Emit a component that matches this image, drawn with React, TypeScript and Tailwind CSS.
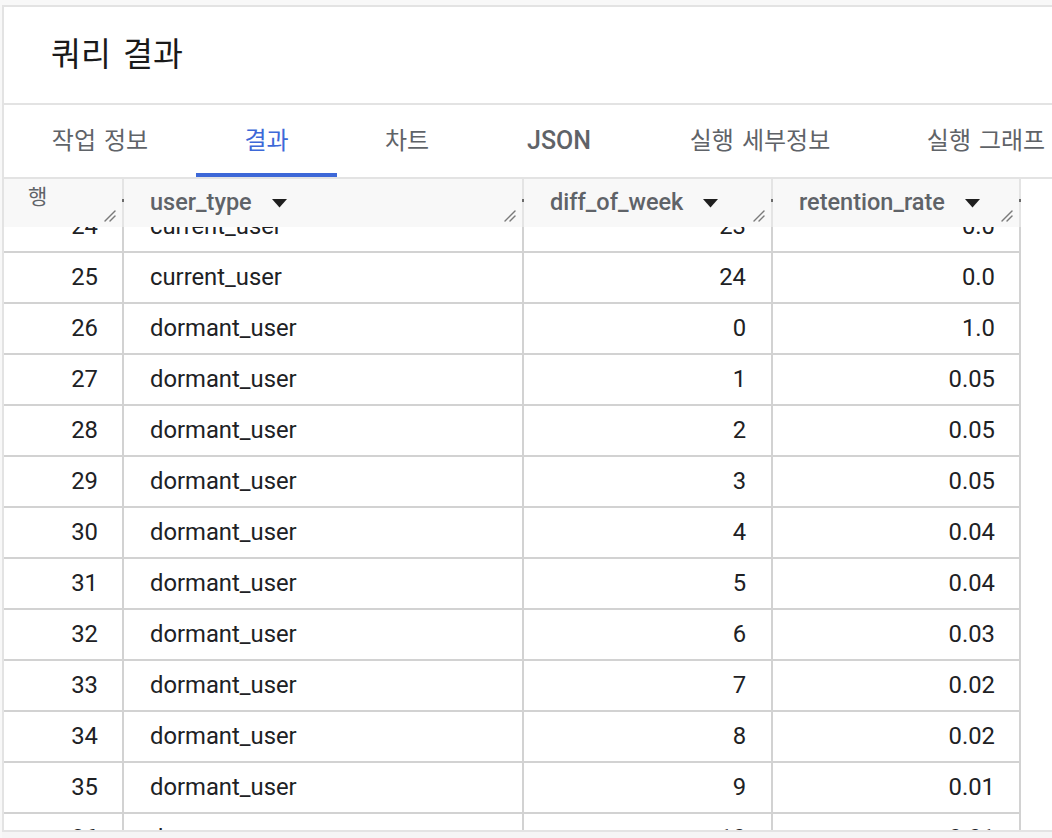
import React from "react";

const rows: [string, string, string, string][] = [
  ["24", "current_user", "23", "0.0"],
  ["25", "current_user", "24", "0.0"],
  ["26", "dormant_user", "0", "1.0"],
  ["27", "dormant_user", "1", "0.05"],
  ["28", "dormant_user", "2", "0.05"],
  ["29", "dormant_user", "3", "0.05"],
  ["30", "dormant_user", "4", "0.04"],
  ["31", "dormant_user", "5", "0.04"],
  ["32", "dormant_user", "6", "0.03"],
  ["33", "dormant_user", "7", "0.02"],
  ["34", "dormant_user", "8", "0.02"],
  ["35", "dormant_user", "9", "0.01"],
  ["36", "dormant_user", "10", "0.01"],
];

const tabs = [
  { label: "작업 정보", w: "w-[192px]" },
  { label: "결과", w: "w-[141px]", active: true },
  { label: "차트", w: "w-[140px]" },
  { label: "JSON", w: "w-[164px]", latin: true },
  { label: "실행 세부정보", w: "w-[238px]" },
  { label: "실행 그래프", w: "w-[214px]" },
];

function Grip() {
  return (
    <svg width="14" height="14" viewBox="0 0 14 14" className="absolute right-[5px] bottom-[5px]">
      <path d="M2 13 L12 3" stroke="#7a7a7a" strokeWidth="1.4" strokeLinecap="round" />
      <path d="M7 13 L12 8" stroke="#7a7a7a" strokeWidth="1.4" strokeLinecap="round" />
    </svg>
  );
}

function Caret() {
  return (
    <svg width="15" height="9" viewBox="0 0 15 9" className="ml-[20px] shrink-0">
      <path d="M0 0 H15 L7.5 8.5 Z" fill="#1f1f1f" />
    </svg>
  );
}

function Tick() {
  return <span className="absolute right-[-2px] top-[20px] w-[2px] h-[3px] bg-[#6b6b6b]" />;
}

function HeadCell({ label, w }: { label: string; w: string }) {
  return (
    <div className={`${w} relative h-full flex items-center pl-[26px] border-r-2 border-[#e4e4e4] bg-[#f8f8f8]`}>
      <span className="text-[23.5px] font-medium text-[#5f6368]">{label}</span>
      <Caret />
      <Tick />
      <Grip />
    </div>
  );
}

export default function App() {
  return (
    <div className="w-[1052px] h-[838px] overflow-hidden bg-[#f8f8f8] pt-[5px] pl-[2px] flex flex-col font-['Roboto','Noto_Sans_CJK_KR',sans-serif]">
      <div className="flex-1 min-h-0 flex flex-col bg-white border-l-2 border-t-2 border-[#e3e3e3]">
        <div className="h-[96px] shrink-0 flex items-center pl-[47px] pb-[6px] text-[32.5px] text-[#1a1a1a] font-['Noto_Sans_CJK_KR',sans-serif] [word-spacing:5px]">
          쿼리 결과
        </div>
        <div className="h-[76px] shrink-0 flex border-t-2 border-b-2 border-[#e3e3e3] overflow-hidden">
          {tabs.map((t) => (
            <div
              key={t.label}
              className={`${t.w} shrink-0 h-full flex items-center justify-center ${
                t.active
                  ? "text-[#3d68d8] shadow-[inset_0_-4px_0_#3d68d8]"
                  : "text-[#5f6368]"
              } ${t.latin ? "text-[25px] font-medium" : "text-[24px] [word-spacing:2px]"}`}
            >
              {t.label}
            </div>
          ))}
        </div>
        <div className="flex-1 min-h-0 relative overflow-hidden">
          <div className="pt-[23px]">
            {rows.map((r) => (
              <div key={r[0]} className="flex h-[51px] text-[23.8px] text-[#202124]">
                <div className="w-[120px] flex items-center justify-end pr-[24px] border-r-2 border-b-2 border-[#d2d2d2]">
                  {r[0]}
                </div>
                <div className="w-[400px] flex items-center pl-[26px] border-r-2 border-b-2 border-[#d2d2d2]">
                  {r[1]}
                </div>
                <div className="w-[249px] flex items-center justify-end pr-[25px] border-r-2 border-b-2 border-[#d2d2d2]">
                  {r[2]}
                </div>
                <div className="w-[248px] flex items-center justify-end pr-[24px] border-r-2 border-b-2 border-[#d2d2d2]">
                  {r[3]}
                </div>
              </div>
            ))}
          </div>
          <div className="absolute top-0 left-0 h-[48px] flex">
            <div className="w-[120px] relative h-full pl-[24px] pt-[2px] border-r-2 border-[#e4e4e4] bg-[#f8f8f8]">
              <span className="text-[21px] leading-[28px] text-[#5f6368] font-['Noto_Sans_CJK_KR',sans-serif]">행</span>
              <Tick />
              <Grip />
            </div>
            <HeadCell label="user_type" w="w-[400px]" />
            <HeadCell label="diff_of_week" w="w-[249px]" />
            <HeadCell label="retention_rate" w="w-[248px]" />
          </div>
        </div>
      </div>
      <div className="h-[8px] shrink-0 border-t-2 border-[#e3e3e3] bg-[#f5f5f5]" />
    </div>
  );
}
